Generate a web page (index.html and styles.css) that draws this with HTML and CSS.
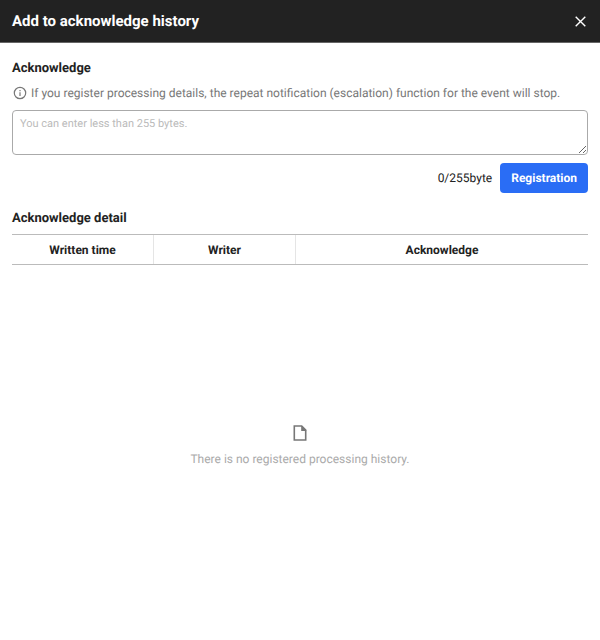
FILE: index.html
```html
<!DOCTYPE html>
<html lang="en">
<head>
<meta charset="utf-8">
<meta name="viewport" content="width=device-width, initial-scale=1">
<title>Add to acknowledge history</title>
<link rel="stylesheet" href="styles.css">
</head>
<body>
<header class="header">
  <h1 class="header-title">Add to acknowledge history</h1>
  <button class="close" type="button" aria-label="Close">
    <svg width="11" height="11" viewBox="0 0 11 11" fill="none" stroke="currentColor" stroke-width="1.4"><path d="M.7.7l9.6 9.6M10.3.7L.7 10.3"/></svg>
  </button>
</header>
<main class="content">
  <form class="form">
    <label class="section-title" for="message">Acknowledge</label>
    <p class="info">
      <svg width="14" height="14" viewBox="0 0 14 14" fill="none" stroke="currentColor" stroke-width="1.2"><circle cx="7" cy="7" r="5.7"/><path d="M7 6.3v3.6M7 4v1.3"/></svg>
      <span>If you register processing details, the repeat notification (escalation) function for the event will stop.</span>
    </p>
    <textarea class="message" id="message" placeholder="You can enter less than 255 bytes."></textarea>
    <div class="actions">
      <span>0/255byte</span>
      <button class="submit" type="button">Registration</button>
    </div>
  </form>
  <section class="detail">
    <h2 class="section-title">Acknowledge detail</h2>
    <table class="history">
      <colgroup><col class="col-time"><col class="col-writer"><col></colgroup>
      <thead><tr><th>Written time</th><th>Writer</th><th>Acknowledge</th></tr></thead>
    </table>
    <div class="empty">
      <svg width="14" height="16" viewBox="0 0 14 16"><path fill="none" stroke="currentColor" stroke-width="1.6" d="M1.3 1h7.4l4 4v10H1.3z"/><path fill="currentColor" d="M8.2 1h1l4 4v1h-5z"/></svg>
      <p>There is no registered processing history.</p>
    </div>
  </section>
</main>
</body>
</html>
```
FILE: styles.css
```css
* { box-sizing: border-box; }
body {
  margin: 0;
  min-height: 100vh;
  display: flex;
  flex-direction: column;
  background: #fff;
  color: #222;
  font: 12px/20px Roboto, sans-serif;
  text-rendering: geometricPrecision;
}
h1, h2, p { margin: 0; }
button { border: 0; font: inherit; cursor: pointer; }
svg { display: block; flex: none; }
.header {
  display: flex;
  align-items: center;
  justify-content: space-between;
  height: 43px;
  padding: 0 12px;
  border-bottom: 1px solid #666;
  background: #222;
  color: #fff;
}
.header-title { font-size: 15px; font-weight: 700; line-height: 20px; }
.close { padding: 2px; background: none; color: #fff; }
.content { flex: 1; display: flex; flex-direction: column; padding: 16px 12px 12px; }
.form { display: flex; flex-direction: column; }
.section-title { font-size: 13px; font-weight: 700; line-height: 20px; }
.info { display: flex; align-items: center; gap: 4px; margin: 4px 0 7px; padding-left: 1px; color: #777; white-space: nowrap; }
.message {
  display: block;
  width: 100%;
  height: 45px;
  padding: 5px 7px;
  border: 1px solid #aaa;
  border-radius: 4px;
  color: #222;
  font: 11px/16px Roboto, sans-serif;
  text-rendering: inherit;
  resize: both;
}
.message::placeholder { color: #bbb; }
.actions { display: flex; align-items: center; justify-content: flex-end; gap: 8px; margin-top: 8px; }
.submit { height: 30px; padding: 0 11px; border-radius: 4px; background: #2a6df5; color: #fff; font-weight: 700; text-rendering: inherit; }
.detail { flex: 1; display: flex; flex-direction: column; margin-top: 16px; }
.history {
  width: 100%;
  margin-top: 5px;
  table-layout: fixed;
  border-collapse: separate;
  border-spacing: 0;
  border-top: 1px solid #bbb;
  border-bottom: 1px solid #bbb;
}
.col-time, .col-writer { width: 142px; }
.history th { height: 29px; padding: 0; font-weight: 700; border-right: 1px solid #e5e5e5; }
.history th:last-child { border-right: 0; }
.empty {
  flex: 1;
  display: flex;
  flex-direction: column;
  align-items: center;
  justify-content: center;
  gap: 8px;
  color: #aaa;
}
.empty svg { color: #777; }
```
